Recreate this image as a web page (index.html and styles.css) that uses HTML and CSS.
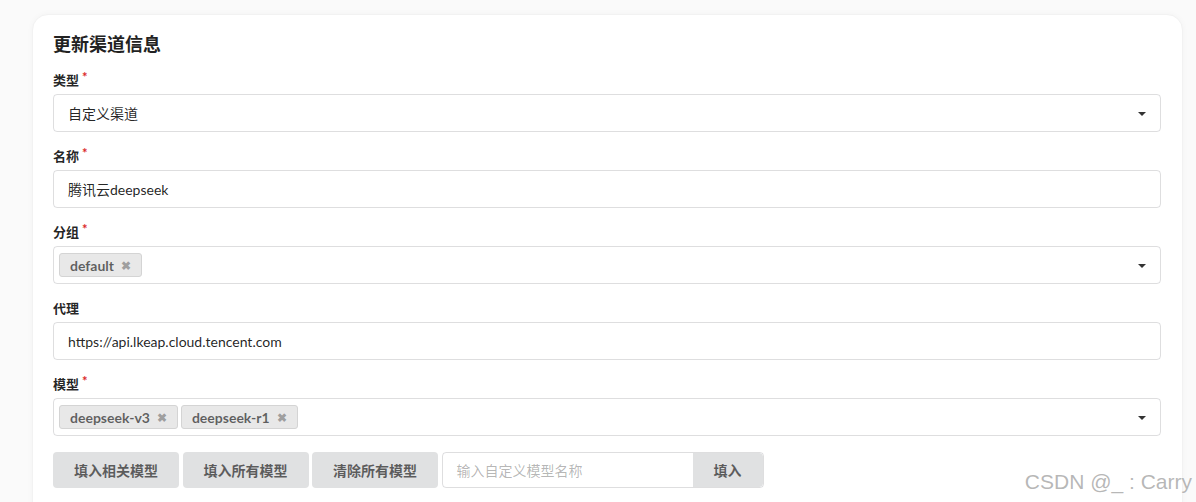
FILE: index.html
```html
<!DOCTYPE html>
<html lang="zh">
<head>
<meta charset="utf-8">
<title>更新渠道信息</title>
<link rel="stylesheet" href="styles.css">
</head>
<body>
<div class="page">
  <div class="card">
    <h3 class="title">更新渠道信息</h3>
    <div class="field">
      <label class="label required">类型</label>
      <div class="control select">
        <span class="value">自定义渠道</span>
        <span class="caret"></span>
      </div>
    </div>
    <div class="field">
      <label class="label required">名称</label>
      <div class="control"><span class="value">腾讯云deepseek</span></div>
    </div>
    <div class="field">
      <label class="label required">分组</label>
      <div class="control select multi">
        <span class="tag">default<span class="x">✖</span></span>
        <span class="caret"></span>
      </div>
    </div>
    <div class="field">
      <label class="label">代理</label>
      <div class="control"><span class="value">https://api.lkeap.cloud.tencent.com</span></div>
    </div>
    <div class="field">
      <label class="label required">模型</label>
      <div class="control select multi">
        <span class="tag">deepseek-v3<span class="x">✖</span></span>
        <span class="tag">deepseek-r1<span class="x">✖</span></span>
        <span class="caret"></span>
      </div>
    </div>
    <div class="actions">
      <button class="btn">填入相关模型</button>
      <button class="btn">填入所有模型</button>
      <button class="btn">清除所有模型</button>
      <div class="action-input">
        <span class="placeholder">输入自定义模型名称</span>
        <button class="btn attached">填入</button>
      </div>
    </div>
  </div>
  <div class="watermark">CSDN @_ : Carry</div>
</div>
</body>
</html>
```

FILE: styles.css
```css
html, body {
  margin: 0;
  padding: 0;
  background: #fafafa;
  font-family: Lato, "Noto Sans CJK SC", "Helvetica Neue", Arial, sans-serif;
  color: rgba(0, 0, 0, 0.87);
  font-size: 14px;
}

.page {
  position: relative;
  height: 502px;
  overflow: hidden;
  padding: 14px 13px 0 32px;
  box-sizing: border-box;
}

.card {
  background: #fff;
  border: 1px solid #f2f2f2;
  border-radius: 16px;
  box-shadow: 0 0 6px rgba(0, 0, 0, 0.03);
  padding: 17px 21px 40px 20px;
  width: 1151px;
  box-sizing: border-box;
}

.title {
  margin: 0 0 14px 0;
  font-size: 18px;
  line-height: 24px;
  font-weight: 700;
  color: #222;
}

.field {
  margin-bottom: 14px;
}

.label {
  display: block;
  font-size: 13px;
  font-weight: 700;
  line-height: 20px;
  margin-bottom: 4px;
  color: rgba(0, 0, 0, 0.87);
}

.label.required::after {
  content: "*";
  color: #db2828;
  margin-left: 3px;
  position: relative;
  top: -3px;
  font-size: 13px;
}

.control {
  height: 38px;
  box-sizing: border-box;
  border: 1px solid rgba(34, 36, 38, 0.15);
  border-radius: 4px;
  display: flex;
  align-items: center;
  padding: 0 14px;
  position: relative;
}

.value {
  font-size: 14px;
  line-height: 17px;
}

.multi {
  padding-left: 5px;
  gap: 3px;
}

.tag {
  display: inline-flex;
  align-items: center;
  height: 24px;
  box-sizing: border-box;
  padding: 0 10px 0 10px;
  background: #e8e8e8;
  border: 1px solid #d4d4d4;
  border-radius: 3px;
  font-size: 14px;
  font-weight: 700;
  color: rgba(0, 0, 0, 0.6);
}

.tag .x {
  font-size: 12px;
  color: rgba(0, 0, 0, 0.33);
  margin-left: 7px;
}

.caret {
  position: absolute;
  right: 14px;
  top: 17px;
  width: 0;
  height: 0;
  border-left: 4px solid transparent;
  border-right: 4px solid transparent;
  border-top: 4px solid #333;
}

.actions {
  display: flex;
  align-items: stretch;
  gap: 3.5px;
  margin-top: 16px;
  height: 36px;
}

.btn {
  font-family: inherit;
  border: none;
  background: #e0e1e2;
  color: rgba(0, 0, 0, 0.6);
  font-size: 14px;
  font-weight: 700;
  border-radius: 4px;
  width: 126px;
  padding: 0;
  height: 36px;
}

.action-input {
  display: flex;
  width: 322px;
  height: 36px;
  box-sizing: border-box;
  border: 1px solid rgba(34, 36, 38, 0.15);
  border-radius: 4px;
  overflow: hidden;
}

.placeholder {
  flex: 1;
  display: flex;
  align-items: center;
  padding-left: 14px;
  font-size: 14px;
  color: rgba(0, 0, 0, 0.3);
}

.btn.attached {
  width: 70px;
  height: 34px;
  border-radius: 0 4px 4px 0;
}

.watermark {
  position: absolute;
  right: 4px;
  bottom: 8px;
  font-family: "Liberation Sans", Arial, sans-serif;
  font-size: 21px;
  color: rgba(160, 160, 160, 0.75);
  text-shadow: 0 0 2px #fff;
}
```
